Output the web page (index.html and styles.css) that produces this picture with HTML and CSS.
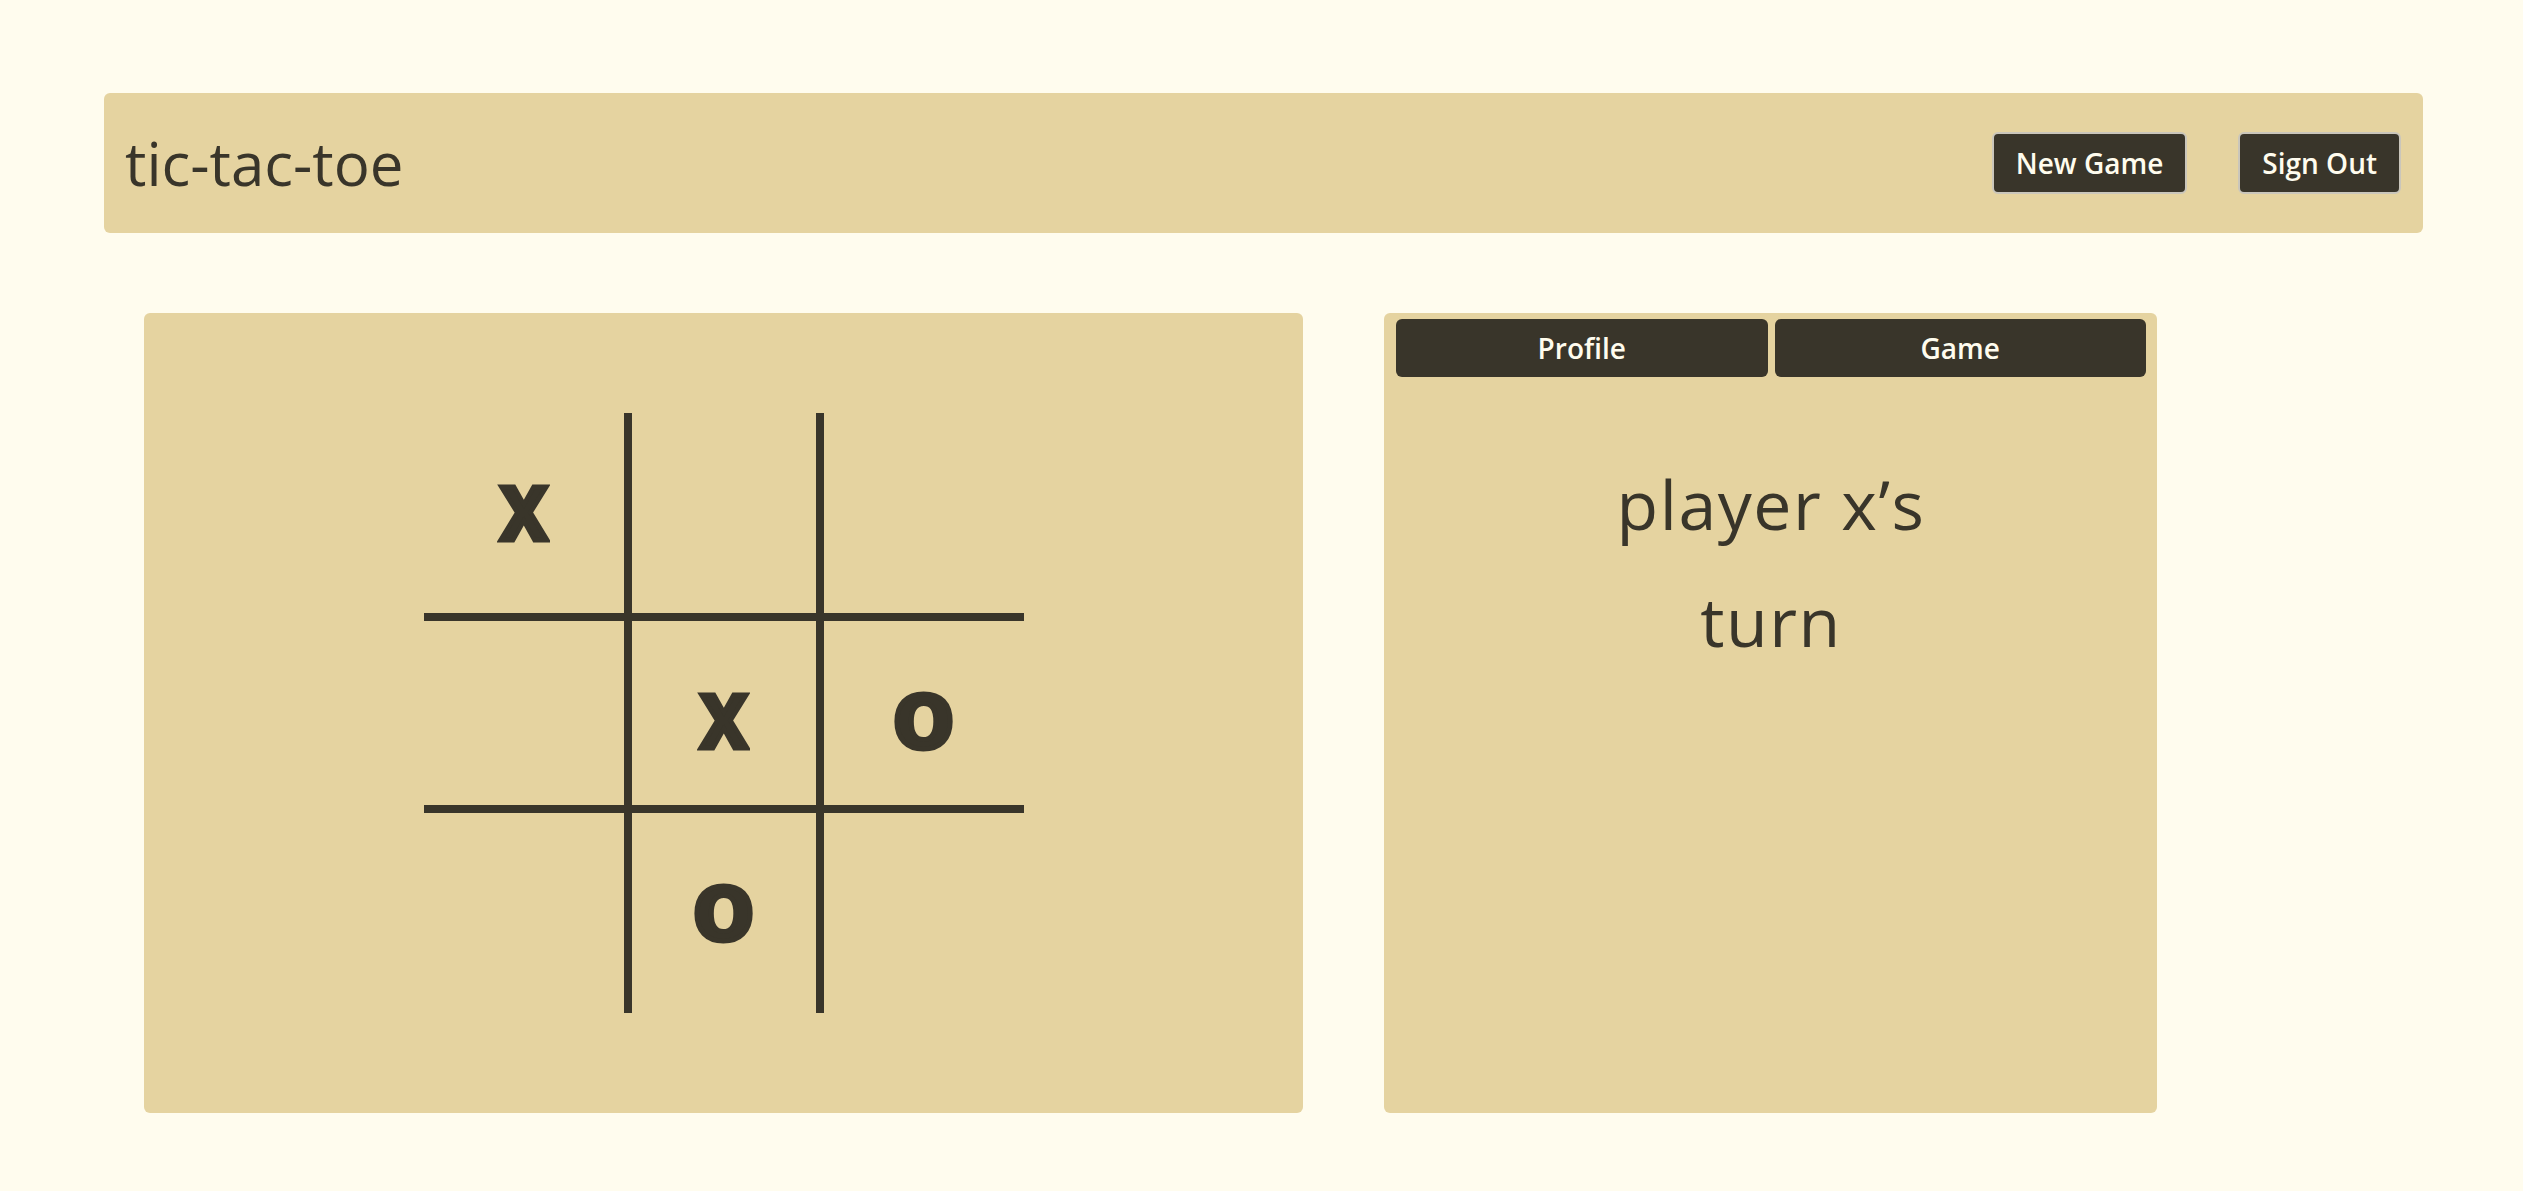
FILE: index.html
```html
<!DOCTYPE html>
<html lang="en">
<head>
<meta charset="utf-8">
<title>tic-tac-toe</title>
<link rel="stylesheet" href="styles.css">
</head>
<body>
<div class="page">
  <header class="topbar">
    <h1 class="brand">tic-tac-toe</h1>
    <nav class="actions">
      <button class="btn">New Game</button>
      <button class="btn">Sign Out</button>
    </nav>
  </header>
  <main class="main">
    <section class="board-panel">
      <div class="board">
        <div class="cell"><span class="mark mark-x">x</span></div>
        <div class="cell col-mid"></div>
        <div class="cell"></div>
        <div class="cell row-mid"></div>
        <div class="cell row-mid col-mid"><span class="mark mark-x">x</span></div>
        <div class="cell row-mid"><span class="mark">o</span></div>
        <div class="cell"></div>
        <div class="cell col-mid"><span class="mark">o</span></div>
        <div class="cell"></div>
      </div>
    </section>
    <aside class="side-panel">
      <div class="tabs">
        <button class="tab">Profile</button>
        <button class="tab">Game</button>
      </div>
      <p class="status">player x’s turn</p>
    </aside>
  </main>
</div>
</body>
</html>
```

FILE: styles.css
```css
html, body {
  margin: 0;
  padding: 0;
}

body {
  background: #fffcee;
  color: #39352a;
  font-family: "Open Sans", "Liberation Sans", sans-serif;
}

.page {
  padding: 93px 100px 0 104px;
}

.topbar {
  height: 140px;
  box-sizing: border-box;
  background: #e5d3a0;
  border-radius: 6px;
  display: flex;
  align-items: center;
  justify-content: space-between;
  padding: 0 22px 0 21px;
}

.brand {
  margin: 0;
  font-size: 60px;
  font-weight: 400;
  line-height: 1;
  color: #39352a;
}

.actions {
  display: flex;
  gap: 51px;
}

.btn {
  height: 62px;
  box-sizing: border-box;
  padding: 0 22px;
  background: #39352a;
  color: #fffcee;
  border: 2px solid #cac6bb;
  border-radius: 6px;
  font-family: "Open Sans", "Liberation Sans", sans-serif;
  font-size: 28px;
  font-weight: 600;
}

.main {
  display: flex;
  gap: 81px;
  margin-top: 80px;
  padding-left: 40px;
}

.board-panel {
  width: 1159px;
  height: 800px;
  background: #e5d3a0;
  border-radius: 6px;
  display: flex;
  align-items: center;
  justify-content: center;
}

.board {
  display: grid;
  grid-template-columns: repeat(3, 200px);
  grid-template-rows: repeat(3, 200px);
}

.cell {
  box-sizing: border-box;
  border-color: #39352a;
  border-style: solid;
  border-width: 0;
  text-align: center;
}

.col-mid {
  border-left-width: 8px;
  border-right-width: 8px;
}

.row-mid {
  border-top-width: 8px;
  border-bottom-width: 8px;
}

.mark {
  display: inline-block;
  font-family: "Liberation Sans", "Arial", sans-serif;
  font-weight: 700;
  font-size: 100px;
  line-height: 100px;
  padding-top: 42px;
  color: #39352a;
  -webkit-text-stroke: 5px #39352a;
  stroke-linejoin: round;
}

.mark-x {
  transform: scaleX(0.86);
}

.side-panel {
  width: 773px;
  height: 800px;
  box-sizing: border-box;
  background: #e5d3a0;
  border-radius: 6px;
  padding: 6px 11px 0 12px;
}

.tabs {
  display: flex;
  gap: 7px;
}

.tab {
  flex: 1;
  height: 58px;
  background: #39352a;
  color: #fffcee;
  border: none;
  border-radius: 6px;
  font-family: "Open Sans", "Liberation Sans", sans-serif;
  font-size: 28px;
  font-weight: 600;
}

.status {
  margin: 68px auto 0;
  max-width: 400px;
  text-align: center;
  font-size: 68px;
  letter-spacing: 1.5px;
  line-height: 117px;
  color: #39352a;
}
```
